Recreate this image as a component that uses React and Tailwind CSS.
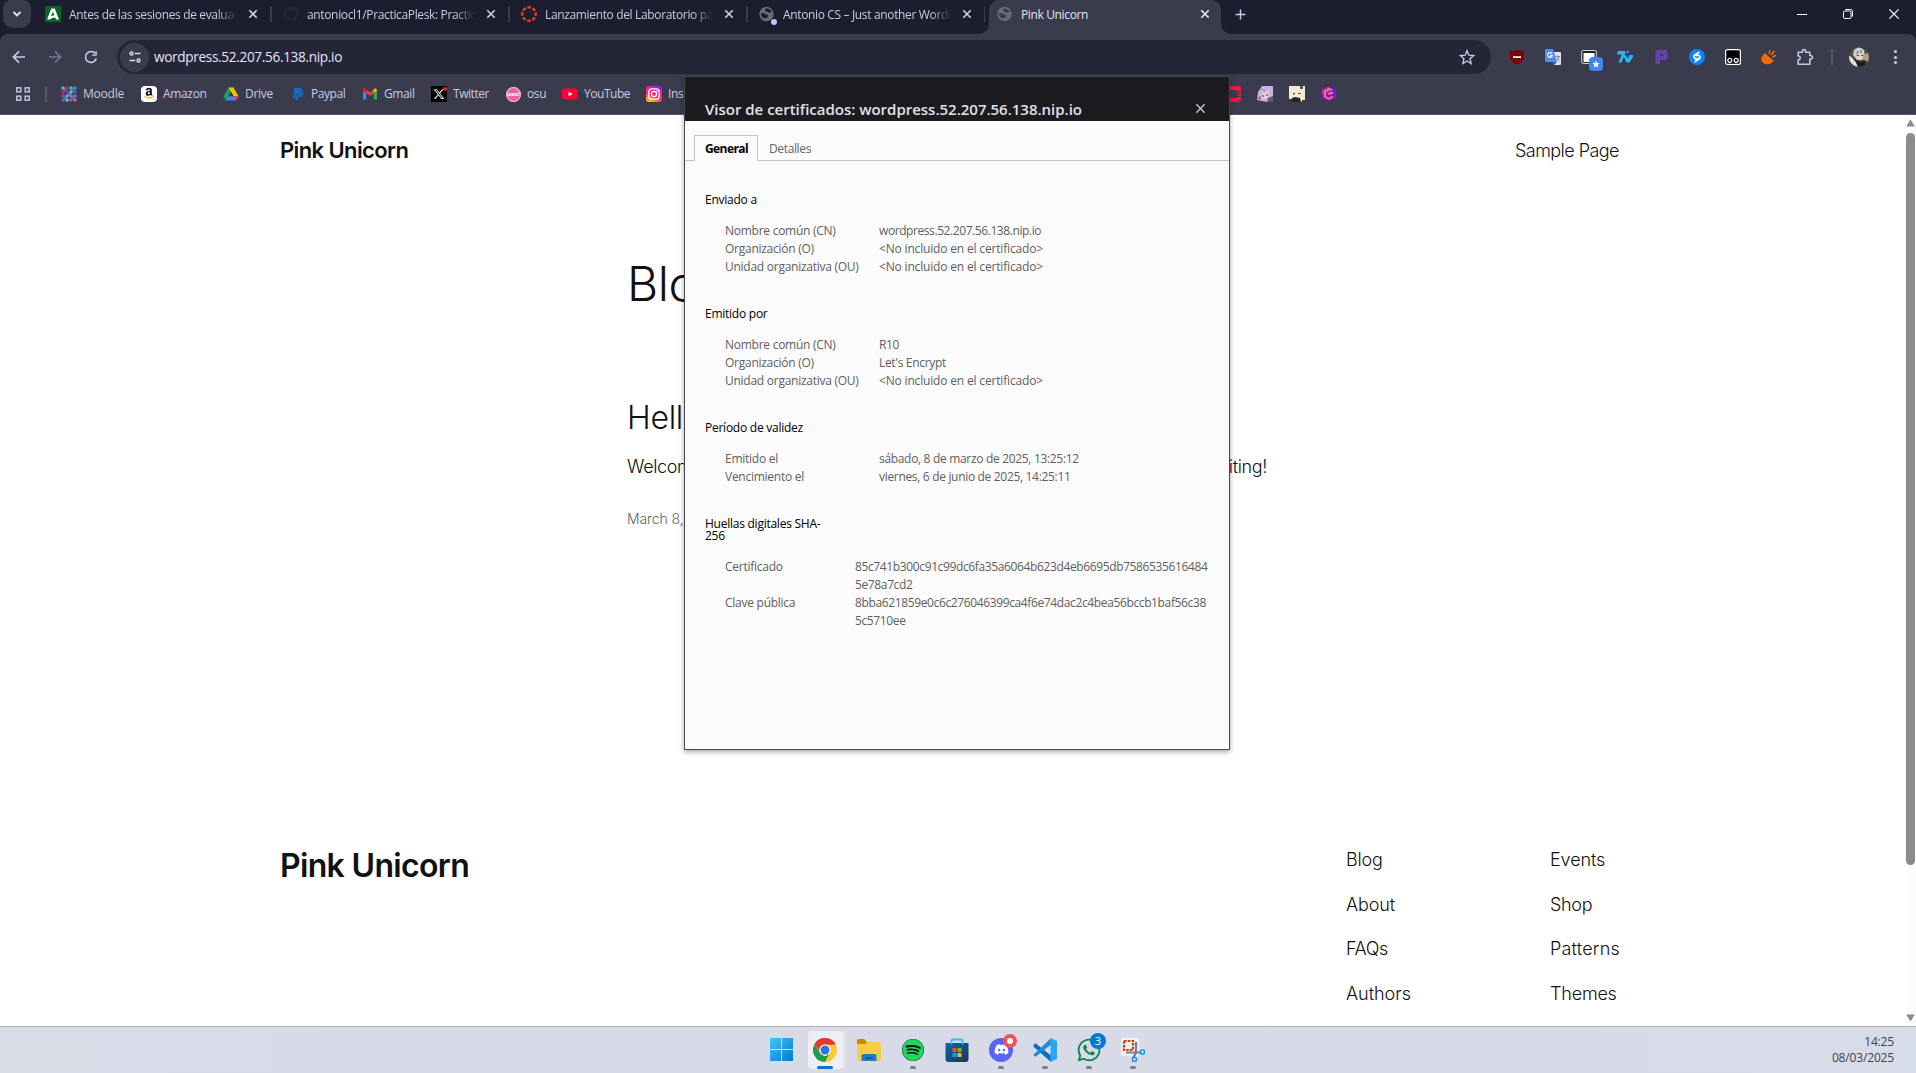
import React from "react";
import { FaSpotify, FaDiscord, FaWhatsapp, FaPaypal, FaAmazon, FaXTwitter, FaGithub } from "react-icons/fa6";

function CloseX({ size = 8, stroke = "#d0d2e4", width = 1.6 }) {
  return (
    <svg width={size} height={size} viewBox="0 0 8 8" className="shrink-0 overflow-visible">
      <path d="M0.3 0.3 7.7 7.7M7.7 0.3 0.3 7.7" stroke={stroke} strokeWidth={width} fill="none" />
    </svg>
  );
}

function JuntaIcon() {
  return (
    <svg width="16" height="16" viewBox="0 0 16 16">
      <path d="M0 0H16V16H0Z" fill="#0b6324" />
      <path d="M2 13.500 6.300 2.500H9.700L14 13.500H11L8 5.600 5.200 12Z" fill="#fff" />
      <path d="M2.500 13.500C4.500 10.500 8 9 11.400 9.400L12.200 11.600C9 11 6.500 11.600 5 13.500Z" fill="#fff" />
    </svg>
  );
}

function CanvasIcon() {
  return (
    <svg width="16" height="16" viewBox="0 0 16 16">
      <circle cx="8" cy="8" r="6.7" fill="none" stroke="#e63f2c" strokeWidth="2.4" strokeDasharray="3.6 1.66" strokeDashoffset="1.8" />
    </svg>
  );
}

function GlobeIcon({ light = "#3a3b4d" }) {
  return (
    <svg width="16" height="16" viewBox="0 0 16 16">
      <circle cx="7.5" cy="8" r="7.2" fill="#6a6d75" />
      <path d="M1.800 7.500C3.500 6.800 6 7.200 6.800 8S9.300 8.600 9.300 10 7.600 11.500 6.400 12.600C4 12.400 2 10.500 1.800 7.500Z" fill={light} />
      <path d="M6.800 2.600C8.500 2.200 11.500 2.900 12.600 5.500 12.300 6.800 11.200 6.600 10 6.600S8.500 5.600 7.200 5.400 5.600 3.400 6.800 2.600Z" fill={light} />
    </svg>
  );
}

const tabs = [
  { title: "Antes de las sesiones de evaluación", icon: <JuntaIcon /> },
  { title: "antoniocl1/PracticaPlesk: Practica", icon: <FaGithub size={16} color="#24292c" /> },
  { title: "Lanzamiento del Laboratorio para", icon: <CanvasIcon /> },
  {
    title: "Antonio CS – Just another WordPress",
    icon: (
      <div className="relative">
        <GlobeIcon light="#1c1d2e" />
        <span className="absolute top-[13px] left-[12px] size-1.5 rounded-full bg-[#bfc2fb]" />
      </div>
    ),
  },
];

function Tab({ title, icon }) {
  return (
    <div className="flex h-7 w-[238px] items-center pl-[11px]">
      <div className="w-6 shrink-0">{icon}</div>
      <div className="mt-0.5 w-[168px] overflow-hidden text-xs leading-5 tracking-[-0.35px] whitespace-nowrap text-[#c8cbe2] [mask-image:linear-gradient(to_right,black_148px,transparent_168px)]">
        {title}
      </div>
      <div className="ml-3"><CloseX /></div>
      <div className="ml-auto h-4 w-0.5 bg-[#3a3b4d]" />
    </div>
  );
}

function TabStrip() {
  return (
    <div className="flex h-[34px] items-start bg-[#1c1d2e]">
      <div className="ml-[3px] flex h-7 w-7 items-center justify-center rounded-b-[10px] rounded-t-lg bg-[#3a3b4d]">
        <svg width="10" height="6" viewBox="0 0 10 6"><path d="M1.500 1 5 4.500 8.500 1" stroke="#e0e2f2" strokeWidth="1.900" fill="none" /></svg>
      </div>
      <div className="ml-[3px] flex">
        {tabs.map((t, i) => (
          <div key={i} className={i === 3 ? "-mr-0.5 w-[237px] overflow-hidden" : ""}><Tab {...t} /></div>
        ))}
      </div>
      <div className="relative z-10 ml-[6px] flex h-[34px] w-[232px] items-start rounded-t-[10px] bg-[#3a3b4d] pl-2">
        <svg className="absolute bottom-0 -left-[10px]" width="10" height="10" viewBox="0 0 10 10"><path d="M10 0V10H0A10 10 0 0 0 10 0Z" fill="#3a3b4d" /></svg>
        <svg className="absolute -right-[10px] bottom-0" width="10" height="10" viewBox="0 0 10 10"><path d="M0 0V10H10A10 10 0 0 1 0 0Z" fill="#3a3b4d" /></svg>
        <div className="flex h-7 items-center">
          <div className="w-6 shrink-0"><GlobeIcon /></div>
          <div className="mt-0.5 w-[180px] text-xs leading-5 tracking-[-0.36px] text-[#e2e4f2]">Pink Unicorn</div>
          <CloseX stroke="#e8eaf6" />
        </div>
      </div>
      <div className="ml-[14px] flex h-7 items-center">
        <svg width="11" height="11" viewBox="0 0 11 11"><path d="M5.500 0.500V10.500M0.500 5.500H10.500" stroke="#c8cbe2" strokeWidth="1.500" /></svg>
      </div>
      <div className="-mr-px ml-auto flex h-7 items-center">
        <div className="flex w-[46px] justify-center"><div className="h-px w-2.5 bg-white" /></div>
        <div className="flex w-[46px] justify-center">
          <svg width="10" height="10" viewBox="0 0 10 10" fill="none" stroke="#fff">
            <rect x="0.500" y="2" width="7.500" height="7.500" rx="1.300" />
            <path d="M2.500 0.500H7.500A2 2 0 0 1 9.500 2.500V7.500" />
          </svg>
        </div>
        <div className="flex w-[46px] justify-center"><CloseX size={10} stroke="#fff" width={1} /></div>
      </div>
    </div>
  );
}

const extensions = [
  <svg width="16" height="16" viewBox="0 0 16 16"><path d="M8 0.500C10 1.800 12.500 2.200 15 2V8.500C15 12 11 14 8 15.500 5 14 1 12 1 8.500V2C3.500 2.200 6 1.800 8 0.500Z" fill="#800000" /><path d="M4 7.200H12V9H4Z" fill="#fff" /></svg>,
  <svg width="16" height="16" viewBox="0 0 16 16">
    <path d="M6 3H15.200Q16 3 16 4V15Q16 16 15 16H9Z" fill="#dfe1e4" />
    <path d="M1 0H8L12 13H1Q0 13 0 12V1Q0 0 1 0Z" fill="#4f8bf5" />
    <path d="M9 16 12 13H8Z" fill="#3057c8" />
    <path d="M7 4.800A2.400 2.400 0 1 0 7.200 6.600H5" fill="none" stroke="#fff" strokeWidth="1.200" />
    <path d="M10.500 7.500H15M12.700 6.500V7.500M14.200 7.800Q13.500 10.500 11.500 11.700M11.700 8.500Q12.500 10.500 14.500 12" fill="none" stroke="#71838e" strokeWidth="0.900" />
  </svg>,
  <div className="relative">
    <svg width="16" height="16" viewBox="0 0 16 16"><rect x="0.700" y="1.500" width="14.600" height="13" rx="1.500" fill="#222" stroke="#d8d8d8" /><path d="M2.500 4H13.500V13H2.500Z" fill="#fff" /></svg>
    <div className="absolute top-[8px] left-[8px] flex size-3.5 items-center justify-center rounded bg-[#4285f4]">
      <svg width="8" height="8" viewBox="0 0 24 24" fill="#fff"><path d="M12 1 15 9H23L17 14 19 23 12 18 5 23 7 14 1 9H9Z" /></svg>
    </div>
  </div>,
  <svg width="16" height="14" viewBox="0 0 16 14" fill="#29b6f0"><path d="M1 1H8L8.500 3 4.500 12.500H1.500L4.800 4.500H0Z" /><path d="M9 1.500 11 0.500 12 2.500 10.500 3.500ZM6.500 6 9 5 10.500 8.500 12.500 5H16V7L12.500 12.500H9.500Z" /></svg>,
  <svg width="13" height="14" viewBox="0 0 13 14"><path d="M0.500 0H11.500L12.500 2V8L11 10H5V14H0.500ZM5 4V6H8.500V4Z" fill="#6a3fb0" fillRule="evenodd" /></svg>,
  <svg width="16" height="16" viewBox="0 0 16 16"><circle cx="8" cy="8" r="8" fill="#0a84fb" /><path d="M9.800 3.500 5.600 6.200Q4.200 7.600 5.600 9.100T8.600 9.400M6.200 12.500 10.400 9.800Q11.800 8.400 10.400 6.900T7.400 6.600" fill="none" stroke="#fff" strokeWidth="1.700" strokeLinecap="round" /></svg>,
  <svg width="16" height="16" viewBox="0 0 16 16"><rect x="0.600" y="0.600" width="14.800" height="14.800" rx="2" fill="#000" stroke="#fff" strokeWidth="1.200" /><circle cx="4.800" cy="11.300" r="2" fill="#000" stroke="#fff" strokeWidth="1.200" /><circle cx="11.200" cy="11.300" r="2" fill="#000" stroke="#fff" strokeWidth="1.200" /></svg>,
  <svg width="16" height="16" viewBox="0 0 16 16"><path d="M3.200 5.500C0.500 7.500 0 11 2 13.200 4.200 15.500 9 15.500 11.500 12.500Z" fill="#ff6a00" stroke="#ff6a00" strokeLinejoin="round" /><path d="M3.200 5 12 12.500" stroke="#ff6a00" strokeWidth="2.200" /><path d="M8.300 4.800 8.800 1.200M10.200 6 13.300 2M11.500 8 15 6.300" stroke="#ff6a00" strokeWidth="1.600" /></svg>,
  <svg width="18" height="18" viewBox="0 0 18 18"><path d="M2.200 4.200H6.400Q6.200 1.500 8 1.500T9.600 4.200H13.800V7.500Q16.500 7.500 16.500 9.300T13.800 11V16.200H2.200V12Q4.300 11.500 4.300 9.900T2.200 7.800Z" fill="none" stroke="#c4c8e0" strokeWidth="1.600" strokeLinejoin="round" /></svg>,
];

function Toolbar() {
  return (
    <div className="flex h-[46px] items-center bg-[#3a3b4d]">
      <div className="ml-px flex w-[116px] shrink-0">
        <div className="flex w-9 justify-center">
          <svg width="14" height="14" viewBox="0 0 14 14" fill="none" stroke="#c8cbe2" strokeWidth="1.700"><path d="M13 7H1.500M7 1.300 1.400 7 7 12.700" /></svg>
        </div>
        <div className="flex w-9 justify-center">
          <svg width="14" height="14" viewBox="0 0 14 14" fill="none" stroke="#75778c" strokeWidth="1.700"><path d="M1 7H12.500M7 1.300 12.600 7 7 12.700" /></svg>
        </div>
        <div className="flex w-9 justify-center">
          <svg width="14" height="14" viewBox="0 0 14 14"><path d="M12.300 8.500A5.500 5.500 0 1 1 11.300 3.500" fill="none" stroke="#c8cbe2" strokeWidth="1.600" /><path d="M12.800 1V5.800H8V4.400H11.400V1Z" fill="#c8cbe2" /></svg>
        </div>
      </div>
      <div className="flex h-[34px] w-[1374px] items-center rounded-full bg-[#242537] pl-[3px]">
        <div className="flex size-[29px] items-center justify-center rounded-full bg-[#3a3b4d]">
          <svg width="12" height="12" viewBox="0 0 12 12" fill="none" stroke="#d9dbee" strokeWidth="1.400"><circle cx="2.500" cy="2.500" r="1.500" /><path d="M5.800 2.500H11.500M0.500 9.500H6.200" /><circle cx="9.500" cy="9.500" r="1.500" /></svg>
        </div>
        <div className="ml-[5px] text-[13.6px] leading-5 tracking-[-0.33px] text-[#e4e6f6]">wordpress.52.207.56.138.nip.io</div>
        <svg className="mr-4 ml-auto" width="16" height="16" viewBox="0 0 24 24" fill="none" stroke="#c8cbe2" strokeWidth="2"><path d="M12 2.500 14.700 9.200 22 9.800 16.500 14.600 18.200 21.700 12 17.900 5.800 21.700 7.500 14.600 2 9.800 9.300 9.200Z" /></svg>
      </div>
      <div className="ml-2 flex">
        {extensions.map((e, i) => (
          <div key={i} className="flex w-9 items-center justify-center">{e}</div>
        ))}
      </div>
      <div className="ml-2 h-4 w-0.5 rounded bg-[#56586c]" />
      <svg className="ml-4" width="20" height="20" viewBox="0 0 20 20">
        <clipPath id="face"><circle cx="10" cy="10" r="10" /></clipPath>
        <g clipPath="url(#face)">
          <path d="M0 0H20V20H0Z" fill="#4c4f46" />
          <path d="M0 9C4 10 6 16 12 20H0Z" fill="#e9dfcf" />
          <path d="M5 3Q10-2 15 3L16 9 13 13 8 13 4 8Z" fill="#c9cfcb" />
          <path d="M13 9 20 5V15L15 14Z" fill="#b79e86" />
          <path d="M8 8H14L13 12H9Z" fill="#e2d6d0" />
          <path d="M5 11 8 14 12 15 17 13 16 20H9Z" fill="#191a1b" />
          <path d="M7.500 8.500H10M12 8.500H14.500M9 4 8 7M12 3V6" stroke="#5c5450" />
        </g>
      </svg>
      <div className="ml-[25px] flex flex-col gap-[2.5px]">
        <span className="size-[3px] rounded-full bg-[#c8cbe2]" />
        <span className="size-[3px] rounded-full bg-[#c8cbe2]" />
        <span className="size-[3px] rounded-full bg-[#c8cbe2]" />
      </div>
    </div>
  );
}

function MoodleIcon() {
  const colors = ["#35c9a5", "#e9186a", "#35c9a5", "#3a8fe0", "#e9186a", "#2b4fc0", "#4fc2e8", "#8a4bb0", "#8a4bb0", "#35c9a5", "#d9569a", "#3a8fe0", "#8a4bb0", "#4fc2e8", "#a556b8", "#d9569a"];
  return (
    <svg width="16" height="16" viewBox="0 0 16 16">
      <path d="M2 2 14 14M14 2 2 14" stroke="#6b76c8" strokeWidth="1.500" />
      {colors.map((c, i) => <circle key={i} cx={2 + (i % 4) * 4} cy={2 + Math.floor(i / 4) * 4} r="1.800" fill={c} />)}
    </svg>
  );
}

const bookmarks = [
  { w: "w-[80px]", gap: "w-[22px]", ls: "tracking-[-0.22px]", label: "Moodle", icon: <MoodleIcon /> },
  { w: "w-[82px]", gap: "w-[22px]", ls: "tracking-[-0.34px]", label: "Amazon", icon: <div className="flex size-4 items-center justify-center rounded-sm bg-white"><svg width="14" height="14" viewBox="0 0 448 512"><defs><linearGradient id="az" x1="0" y1="0" x2="0" y2="1"><stop offset="0.730" stopColor="#111" /><stop offset="0.740" stopColor="#f90" /></linearGradient></defs><FaAmazon fill="url(#az)" width="448" height="512" size={448} /></svg></div> },
  { w: "w-[67px]", gap: "w-[22px]", ls: "tracking-[-0.3px]", label: "Drive", icon: <svg width="16" height="16" viewBox="0 0 16 16"><path d="M5.500 1.500H10.500L5.300 10.300 2.700 14.500 0.500 10.500Z" fill="#12a45b" /><path d="M5.500 1.500H10.500L15.500 10.300H10.500Z" fill="#fbbc05" /><path d="M5.300 10.300H15.500L13 14.500H2.700Z" fill="#4285f4" /><path d="M8 5.700 10.600 10.300H5.300Z" fill="#3a3b4d" /><path d="M13 14.500 10.500 10.300H15.500Z" fill="#ea4335" /></svg> },
  { w: "w-[72px]", gap: "w-[21px]", ls: "tracking-[-0.45px]", label: "Paypal", icon: <FaPaypal size={14} color="#1769c0" className="mx-px" /> },
  { w: "w-[69px]", gap: "w-[22px]", ls: "tracking-[-0.4px]", label: "Gmail", icon: <svg width="16" height="16" viewBox="0 0 16 16"><path d="M1 4V13.500H4.300V7Z" fill="#4285f4" /><path d="M15 4V13.500H11.700V7Z" fill="#34a853" /><path d="M1 4Q1 2 3 2.500L8 6.500 13 2.500 11.700 7 8 10 4.300 7Z" fill="#ea4335" /><path d="M11.700 3.500 13 2.500Q15 2 15 4.500L11.700 7Z" fill="#fbbc04" /><path d="M1 4.500Q1 2 3 2.500L4.300 3.500V7Z" fill="#c5221f" /></svg> },
  { w: "w-[75px]", gap: "w-[22px]", ls: "tracking-[-0.45px]", label: "Twitter", icon: <div className="relative flex size-4 items-center justify-center bg-black"><FaXTwitter size={12} color="#ddd" /><span className="absolute top-px right-0 size-1 rounded-full bg-[#f4212e]" /></div> },
  { w: "w-[56px]", gap: "w-[21px]", ls: "tracking-[-0.4px]", label: "osu", icon: <div className="flex size-[15px] items-center justify-center rounded-full bg-[#e964a6] text-[6px] leading-none font-bold text-white ring-1 ring-[#f0b8d4] ring-inset">osu!</div> },
  { w: "w-[84px]", gap: "w-[22px]", ls: "tracking-[-0.46px]", label: "YouTube", icon: <svg width="16" height="16" viewBox="0 0 16 16"><rect y="2.500" width="16" height="11" rx="2.500" fill="#ff0033" /><path d="M6.500 5.700 10.500 8 6.500 10.300Z" fill="#fff" /></svg> },
  { w: "w-[80px]", gap: "w-[22px]", ls: "tracking-[-0.35px]", label: "Instagram", icon: <svg width="16" height="16" viewBox="0 0 16 16"><defs><linearGradient id="ig" x1="0.200" y1="1" x2="0.700" y2="0"><stop offset="0" stopColor="#ffc40c" /><stop offset="0.400" stopColor="#ff2d63" /><stop offset="0.800" stopColor="#e814c8" /><stop offset="1" stopColor="#8a20f8" /></linearGradient></defs><rect width="16" height="16" rx="3" fill="url(#ig)" /><rect x="2.800" y="2.800" width="10.400" height="10.400" rx="3" fill="none" stroke="#fff" strokeWidth="1.300" /><circle cx="8" cy="8" r="2.600" fill="none" stroke="#fff" strokeWidth="1.300" /><circle cx="11" cy="5" r="0.700" fill="#fff" /></svg> },
];

function BookmarkBar() {
  return (
    <div className="flex h-[35px] items-center border-b border-[#55565f] bg-[#3a3b4d] pb-1.5 text-xs text-[#c8cbe2]">
      <svg className="ml-4" width="14" height="14" viewBox="0 0 14 14" fill="none" stroke="#b9bcd2" strokeWidth="1.600"><rect x="0.800" y="0.800" width="4" height="4" /><rect x="9.200" y="0.800" width="4" height="4" /><rect x="0.800" y="9.200" width="4" height="4" /><rect x="9.200" y="9.200" width="4" height="4" /></svg>
      <div className="ml-[15px] h-4 w-0.5 bg-[#56586c]" />
      <div className="ml-3.5 flex">
        {bookmarks.map((b) => (
          <div key={b.label} className={`flex items-center ${b.w}`}>
            <div className={`shrink-0 ${b.gap}`}>{b.icon}</div>
            <span className={`leading-4 ${b.ls}`}>{b.label}</span>
          </div>
        ))}
      </div>
      <div className="ml-[499px] flex gap-4">
        <svg width="16" height="16" viewBox="0 0 16 16"><path d="M2 0H14Q16 0 16 2V5H12V4H4V12H12V11H16V14Q16 16 14 16H2Q0 16 0 14V2Q0 0 2 0ZM12 6H16V10H12V9H15V7H12Z" fill="#ed1944" /></svg>
        <svg width="16" height="16" viewBox="0 0 16 16"><path d="M5 0H16V16H10L0 14 1 6Z" fill="#c4b4e4" /><path d="M5 7 11 5 12 10 8 13 4 12Z" fill="#f3cdd2" /><path d="M5 9H7V11H5ZM9 8H11V10H9Z" fill="#df5a5a" /><path d="M1 12 4 10 3 14ZM11 12 16 10V16H10Z" fill="#536077" /><path d="M3 3 8 4 7 7" stroke="#9f8fd0" fill="none" /></svg>
        <svg width="16" height="16" viewBox="0 0 16 16"><path d="M0 0H16V16H0Z" fill="#f3ead2" /><path d="M11 0H14V3H11Z" fill="#4a5c74" /><path d="M4 6H12V11H5Z" fill="#fbe4d8" /><path d="M4 7H6V8.500H4ZM9 7H12V8H9Z" fill="#76513c" /><path d="M3 12 6 11 11 12 12 16H3Z" fill="#25232c" /><path d="M0 13H3V16H0ZM13 14H16V16H13Z" fill="#403c22" /></svg>
        <svg width="16" height="16" viewBox="0 0 16 16"><path d="M8 0.500 15 4V12L8 15.500 1 12V4Z" fill="#7a12ea" /><path d="M8 0.500 1 4V9L9 5Z" fill="#c22cc0" /><path d="M11 3.800 8 3 4 5.500V10.500L8 13 12 10.500M7 8 12 6.500" fill="none" stroke="#ff7a59" strokeWidth="1.900" /></svg>
      </div>
    </div>
  );
}

const footerLinks = [
  [["Blog", "tracking-[-0.2px]"], ["About", "tracking-[-0.12px]"], ["FAQs", "tracking-[-0.4px]"], ["Authors", "tracking-[-0.02px]"]],
  [["Events", "tracking-[-0.1px]"], ["Shop", "tracking-[-0.3px]"], ["Patterns", "tracking-[0.2px]"], ["Themes", "tracking-[-0.2px]"]],
];

function SitePage() {
  return (
    <div className="flex h-[911px] bg-white">
      <div className="w-[1905px] font-[Inter,sans-serif] text-[#111]">
        <header className="flex items-start justify-between pt-[19px] pr-[286px] pl-[280px]">
          <div className="text-[22px] leading-8 font-semibold tracking-[-0.6px]">Pink Unicorn</div>
          <div className="mt-px text-lg leading-8 font-light tracking-[-0.54px]">Sample Page</div>
        </header>
        <main className="flex h-[662px] flex-col pt-[87px] pl-[627px]">
          <h1 className="text-[48px] leading-[60px] font-light tracking-[-0.5px]">Blog</h1>
          <h2 className="mt-[84px] text-[32px] leading-10 font-light tracking-[-0.3px]">Hello world!</h2>
          <p className="mt-[15px] text-lg leading-7 font-light tracking-[-0.347px]">
            Welcome to WordPress. This is your first post. Edit or delete it, then start writing!
          </p>
          <p className="mt-[28px] text-sm leading-5 font-light tracking-[-0.1px] text-[#5f5f5f]">March 8, 2025</p>
        </main>
        <footer className="flex pl-[280px]">
          <div className="w-[1066px] pt-[17px] text-[32px] leading-10 font-semibold tracking-[-0.67px]">Pink Unicorn</div>
          {footerLinks.map((col, i) => (
            <div key={i} className="flex w-[204px] flex-col gap-[16.5px] pt-[17px] text-lg leading-7 font-light">
              {col.map(([label, ls]) => <span key={label} className={ls}>{label}</span>)}
            </div>
          ))}
        </footer>
      </div>
      <div className="flex w-[11px] flex-col items-center bg-[#fcfcfc] pt-1 pb-1">
        <svg width="9" height="8" viewBox="0 0 9 8"><path d="M4.500 0.500 8.800 7.500H0.200Z" fill="#8b8b8b" /></svg>
        <div className="mt-1.5 h-[732px] w-[9px] rounded-full bg-[#8b8b8b]" />
        <svg className="mt-auto" width="9" height="8" viewBox="0 0 9 8"><path d="M4.500 7.500 0.200 0.500H8.800Z" fill="#8b8b8b" /></svg>
      </div>
    </div>
  );
}

const NONE = "<No incluido en el certificado>";
const sections = [
  {
    title: "Enviado a",
    col: "w-[154px]",
    rows: [
      ["Nombre común (CN)", "wordpress.52.207.56.138.nip.io", "tracking-[-0.42px]"],
      ["Organización (O)", NONE, "tracking-[-0.17px]"],
      ["Unidad organizativa (OU)", NONE, "tracking-[-0.17px]"],
    ],
  },
  {
    title: "Emitido por",
    col: "w-[154px]",
    rows: [
      ["Nombre común (CN)", "R10", "tracking-[-0.4px]"],
      ["Organización (O)", "Let's Encrypt", "tracking-[-0.32px]"],
      ["Unidad organizativa (OU)", NONE, "tracking-[-0.17px]"],
    ],
  },
  {
    title: "Período de validez",
    col: "w-[154px]",
    rows: [
      ["Emitido el", "sábado, 8 de marzo de 2025, 13:25:12", "tracking-[-0.32px]"],
      ["Vencimiento el", "viernes, 6 de junio de 2025, 14:25:11", "tracking-[-0.32px]"],
    ],
  },
  {
    title: "Huellas digitales SHA-256",
    col: "w-[130px]",
    rows: [
      ["Certificado", "85c741b300c91c99dc6fa35a6064b623d4eb6695db75865356164845e78a7cd2", "tracking-[-0.372px]"],
      ["Clave pública", "8bba621859e0c6c276046399ca4f6e74dac2c4bea56bccb1baf56c385c5710ee", "tracking-[-0.372px]"],
    ],
  },
];

function CertificateDialog() {
  return (
    <div className="absolute top-[76px] left-[684px] z-20 h-[674px] w-[546px] border border-[#47474f] bg-[#fbfbfb] text-xs shadow-[0_2px_5px_rgba(0,0,0,0.35)]">
      <div className="flex h-11 items-center justify-between bg-[#1c1b20] pr-6 pl-5">
        <div className="mt-[19px] text-[15px] leading-5 font-semibold tracking-[-0.01px] text-[#e4e1ea]">
          Visor de certificados: wordpress.52.207.56.138.nip.io
        </div>
        <div className="mt-[18px]"><CloseX size={9} stroke="#c9c6cf" width={1.3} /></div>
      </div>
      <div className="mt-3.5 flex h-[26px] items-stretch leading-[26px]">
        <div className="w-[9px] border-b border-[#c3c3c3]" />
        <div className="w-[64px] border border-b-0 border-[#c3c3c3] pl-2.5 font-bold tracking-[-0.58px] text-black">General</div>
        <div className="flex-1 border-b border-[#c3c3c3] pt-px pl-[11px] tracking-[-0.36px] text-[#666]">Detalles</div>
      </div>
      <div className="flex flex-col gap-8 pt-[33px] pl-5">
        {sections.map((s) => (
          <section key={s.title}>
            <h3 className="w-[120px] leading-3 tracking-[-0.25px] text-black">{s.title}</h3>
            <div className="mt-4 pl-5 leading-[18px] text-[#5f5f5f]">
              {s.rows.map(([k, v, ls]) => (
                <div key={k} className="flex">
                  <div className={`shrink-0 tracking-[-0.26px] whitespace-nowrap ${s.col}`}>{k}</div>
                  <div className={`w-[355px] break-all ${ls}`}>{v}</div>
                </div>
              ))}
            </div>
          </section>
        ))}
      </div>
    </div>
  );
}

const taskbarApps = [
  { icon: <svg width="23" height="23" viewBox="0 0 23 23"><defs><linearGradient id="win" x1="0" y1="0" x2="1" y2="1"><stop offset="0" stopColor="#45c4f7" /><stop offset="1" stopColor="#0078d4" /></linearGradient></defs><path d="M0 0H11V11H0ZM12 0H23V11H12ZM0 12H11V23H0ZM12 12H23V23H12Z" fill="url(#win)" /></svg> },
  { active: true, icon: <svg width="24" height="24" viewBox="0 0 24 24"><path d="M1.600 6A12 12 0 0 1 22.400 6L12 12Z" fill="#e33b2e" /><path d="M12 6.500H22.650A12 12 0 0 1 12 24L16.800 14.800Z" fill="#fcc934" /><path d="M1.600 6A12 12 0 0 1 22.650 6.500H12L7 14.500Z" fill="#e33b2e" /><path d="M1.600 6 7 15 12 18 16.700 15 12 24A12 12 0 0 1 1.600 6Z" fill="#1e9e4a" /><circle cx="12" cy="12" r="5.700" fill="#fff" /><circle cx="12" cy="12" r="4.500" fill="#2f73e0" /></svg> },
  { icon: <svg width="24" height="22" viewBox="0 0 24 22"><path d="M0 1.500Q0 0 1.500 0H7L10 3H22V8H0Z" fill="#c98a06" /><path d="M0 5H8L10.500 3H22.500Q24 3 24 4.500V20.500Q24 22 22.500 22H1.500Q0 22 0 20.500Z" fill="#fdcc42" /><path d="M4.500 22V17Q4.500 15 6.500 15H17.500Q19.500 15 19.500 17V22Z" fill="#1a7ed0" /><path d="M8 19H16" stroke="#0c4f91" strokeWidth="1.500" /></svg> },
  { running: true, icon: <div className="rounded-full bg-[#111]"><FaSpotify size={22} color="#1ed760" /></div> },
  { icon: <svg width="24" height="24" viewBox="0 0 24 24"><defs><linearGradient id="st" x1="0" y1="0" x2="1" y2="1"><stop offset="0" stopColor="#0f66a5" /><stop offset="1" stopColor="#1d3358" /></linearGradient></defs><path d="M0.500 5H23.500V21Q23.500 24 20.500 24H3.500Q0.500 24 0.500 21Z" fill="url(#st)" /><path d="M6.500 6.500V3Q6.500 1.500 8 1.500H16Q17.500 1.500 17.500 3V6.500" fill="none" stroke="#2fbdf2" strokeWidth="1.900" /><path d="M7.500 10H11.500V14H7.500Z" fill="#f25022" /><path d="M12.500 10H16.500V14H12.500Z" fill="#7fba00" /><path d="M7.500 15H11.500V19H7.500Z" fill="#00a4ef" /><path d="M12.500 15H16.500V19H12.500Z" fill="#ffb900" /></svg> },
  { running: true, icon: <div className="relative flex size-6 items-center justify-center rounded-full bg-[#5865f2]"><FaDiscord size={15} color="#fff" /><span className="absolute -top-1 left-3.5 flex size-3.5 items-center justify-center rounded-full bg-[#ef5555]"><span className="size-1.5 rounded-full bg-white" /></span></div> },
  { running: true, icon: <svg width="24" height="24" viewBox="0 0 24 24"><path d="M0.500 7 2.500 5.200 18 17.500V24L0.500 8.700Z" fill="#0b6fc0" /><path d="M0.500 16.800 17.800 0.300V6.700L2.500 18.800 0.500 17Z" fill="#2189d6" /><path d="M17.500 0 24 3V21L17.500 24Z" fill="#2aa5f2" /></svg> },
  { running: true, icon: <div className="relative"><FaWhatsapp size={26} color="#14854f" /><span className="absolute -top-1 left-[14px] flex size-4 items-center justify-center rounded-full bg-[#0078d4] text-[11px] leading-none text-white">3</span></div> },
  { running: true, icon: <svg width="24" height="24" viewBox="0 0 24 24"><rect width="18" height="18" rx="2" fill="#eff0f2" /><path d="M3 3H12V12H3Z" fill="none" stroke="#d23a0e" strokeWidth="2.200" strokeDasharray="2.500 1.200" /><path d="M15 4V15L12 20M5 14.500H20" stroke="#7c7f85" strokeWidth="2.200" fill="none" /><circle cx="21.500" cy="14" r="2" fill="#fff" stroke="#1899dc" strokeWidth="1.700" /><circle cx="13.500" cy="21.500" r="2" fill="#fff" stroke="#1899dc" strokeWidth="1.700" /></svg> },
];

function Taskbar() {
  return (
    <div className="flex h-[47px] justify-between border-t border-[#aeb0b6] bg-linear-to-r from-[#d9dbe7] via-[#d8dbe7] to-[#d7dce9]">
      <div className="ml-[759px] flex">
        {taskbarApps.map((a, i) => (
          <div key={i} className="flex w-11 flex-col items-center pt-1">
            <div className={a.active ? "flex h-[38px] w-[35px] flex-col items-center rounded bg-[#eeeff5] shadow-[3px_0_0_-0.5px_#e4e6ee]" : "flex h-[38px] w-[35px] flex-col items-center"}>
              <div className="flex h-[35px] items-center pt-0.5">{a.icon}</div>
              {a.active && <div className="h-[3px] w-4 shrink-0 rounded-full bg-[#0078d4]" />}
              {a.running && <div className="h-[3px] w-1.5 shrink-0 rounded-full bg-[#7c7e86]" />}
            </div>
          </div>
        ))}
      </div>
      <div className="flex flex-col items-end pt-[7px] pr-[22px] text-xs leading-4 tracking-[-0.16px] text-[#3f434d]">
        <span>14:25</span>
        <span>08/03/2025</span>
      </div>
    </div>
  );
}

export default function App() {
  return (
    <div className="relative h-[1073px] w-[1916px] overflow-hidden bg-[#1c1d2e] font-['Open_Sans',sans-serif]">
      <TabStrip />
      <div className="overflow-hidden rounded-t-lg">
        <Toolbar />
        <BookmarkBar />
      </div>
      <SitePage />
      <Taskbar />
      <CertificateDialog />
    </div>
  );
}
